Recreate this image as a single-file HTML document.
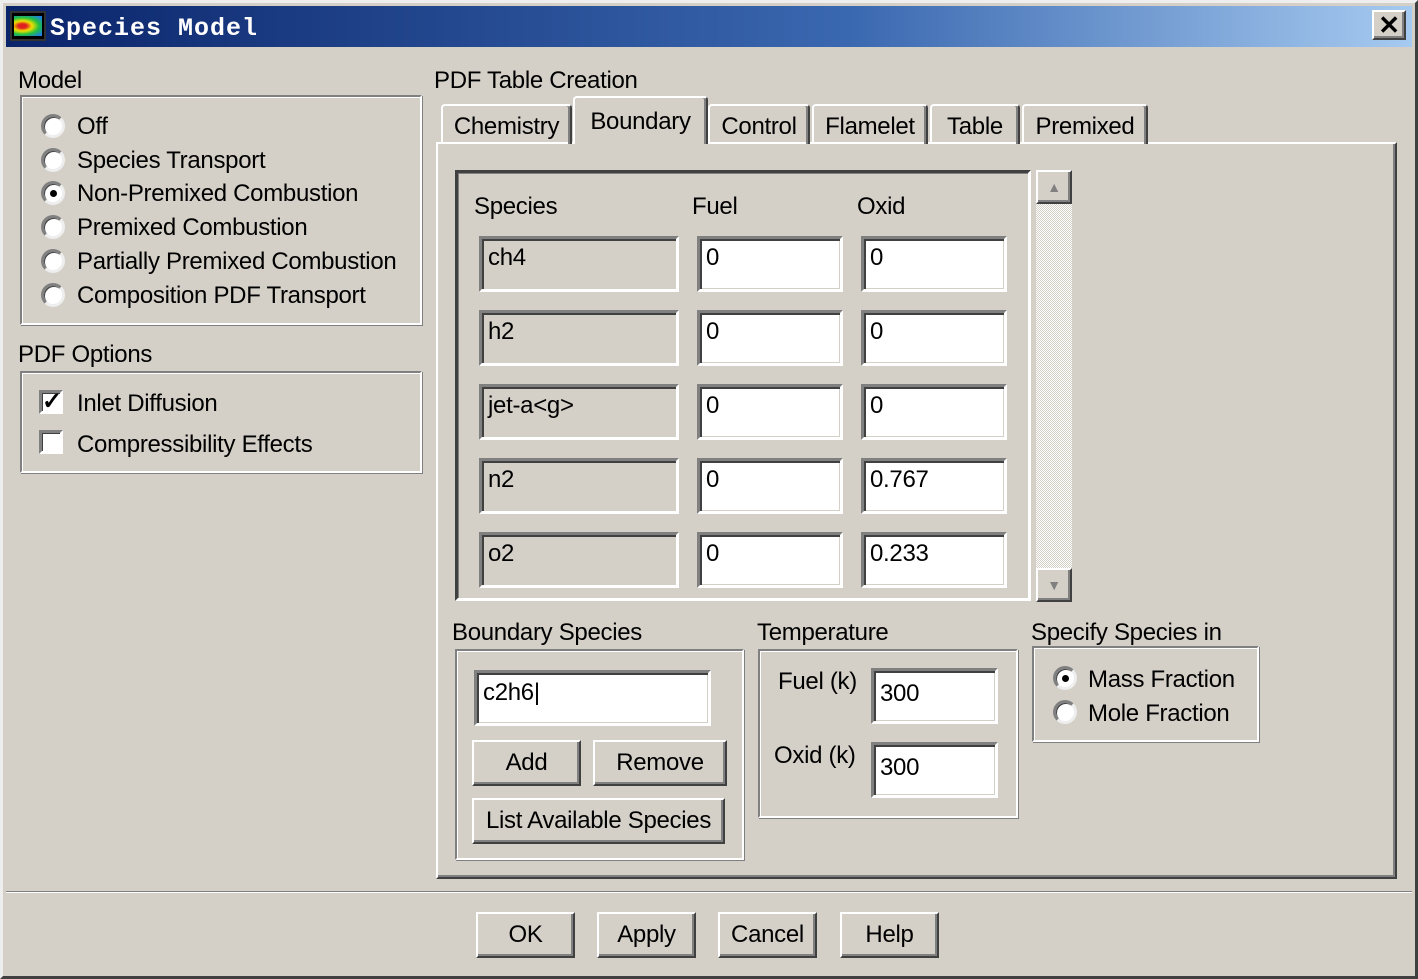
<!DOCTYPE html>
<html><head><meta charset="utf-8"><style>
*{box-sizing:border-box;margin:0;padding:0}
body{width:1418px;height:979px;background:#d4d0c8;position:relative;overflow:hidden;font-family:"Liberation Sans",sans-serif;font-size:24px;letter-spacing:-0.3px;color:#000}
div,span{position:absolute}
.frame{left:0;top:0;width:1418px;height:979px;border:3px solid;border-color:#eee #404040 #404040 #eee}
.title{left:6px;top:6px;width:1406px;height:41px;background:linear-gradient(90deg,#0a246a 0%,#3a68b0 60%,#a6caf0 100%)}
.tt{left:44px;top:8px;color:#fff;font-family:"Liberation Mono",monospace;font-weight:bold;font-size:25px;letter-spacing:1px}
.t{white-space:nowrap;line-height:28px;margin-top:1px}
.etch{border:2px solid;border-color:#808080 #fff #fff #808080;box-shadow:inset 1px 1px 0 #fff,1px 1px 0 #808080}
.sunk{border:3px solid;border-color:#808080 #fff #fff #808080;box-shadow:inset 2px 2px 0 #404040,inset -1px -1px 0 #d4d0c8;background:#fff}
.sunkg{background:#d4d0c8}
.rais{border:2px solid;border-color:#fff #404040 #404040 #fff;box-shadow:inset -2px -2px 0 #808080;background:#d4d0c8;text-align:center;line-height:42px}
.rad{width:24px;height:24px;border-radius:50%;background:#fff;border:3px solid;border-color:#808080 #eee #eee #808080;box-shadow:inset 1px 1px 0 #404040}
.dot{left:6px;top:6px;width:7px;height:7px;border-radius:50%;background:#000}
.chk{width:24px;height:24px;background:#fff;border:3px solid;border-color:#808080 #fff #fff #808080;box-shadow:inset 1px 1px 0 #404040}
.in{padding-left:6px;padding-top:5px;line-height:28px}
.tab{top:100px;height:44px;border:2px solid;border-bottom:none;border-color:#fff #404040 #fff #fff;box-shadow:inset -2px 0 0 #808080;text-align:center;line-height:44px;border-radius:4px 4px 0 0}
</style></head><body>
<div class="frame"></div>
<div class="title">
 <div style="left:4px;top:5px;width:36px;height:30px;background:#000;border:2px solid #333"><div style="left:2px;top:3px;width:28px;height:20px;background:radial-gradient(ellipse at 30% 50%,#e02020 15%,#f0e000 35%,#20c040 60%,#2080e0 90%)"></div></div>
 <div class="tt">Species Model</div>
 <div class="rais" style="left:1366px;top:4px;width:34px;height:30px;line-height:26px;font-weight:bold;font-size:26px">✕</div>
</div>

<div class="t" style="left:18px;top:66px">Model</div>
<div class="etch" style="left:20px;top:95px;width:402px;height:230px"></div>
<div class="rad" style="left:41px;top:114px"></div><div class="t" style="left:77px;top:112px">Off</div>
<div class="rad" style="left:41px;top:148px"></div><div class="t" style="left:77px;top:146px">Species Transport</div>
<div class="rad" style="left:41px;top:181px"><div class="dot"></div></div><div class="t" style="left:77px;top:179px">Non-Premixed Combustion</div>
<div class="rad" style="left:41px;top:215px"></div><div class="t" style="left:77px;top:213px">Premixed Combustion</div>
<div class="rad" style="left:41px;top:249px"></div><div class="t" style="left:77px;top:247px">Partially Premixed Combustion</div>
<div class="rad" style="left:41px;top:283px"></div><div class="t" style="left:77px;top:281px">Composition PDF Transport</div>

<div class="t" style="left:18px;top:340px">PDF Options</div>
<div class="etch" style="left:20px;top:371px;width:402px;height:102px"></div>
<div class="chk" style="left:39px;top:390px"><span style="left:0;top:-6px;font-size:24px;font-weight:bold">✓</span></div><div class="t" style="left:77px;top:389px">Inlet Diffusion</div>
<div class="chk" style="left:39px;top:430px"></div><div class="t" style="left:77px;top:430px">Compressibility Effects</div>

<div class="t" style="left:434px;top:66px">PDF Table Creation</div>
<div style="left:436px;top:142px;width:961px;height:737px;border:2px solid;border-color:#fff #404040 #404040 #fff;box-shadow:inset -2px -2px 0 #808080"></div>
<div class="tab" style="left:441px;width:131px;top:104px;height:40px;line-height:42px">Chemistry</div>
<div class="tab" style="left:708px;width:102px;top:104px;height:40px;line-height:42px">Control</div>
<div class="tab" style="left:812px;width:116px;top:104px;height:40px;line-height:42px">Flamelet</div>
<div class="tab" style="left:930px;width:90px;top:104px;height:40px;line-height:42px">Table</div>
<div class="tab" style="left:1022px;width:126px;top:104px;height:40px;line-height:42px">Premixed</div>
<div class="tab" style="left:573px;width:135px;top:96px;height:48px;line-height:48px;background:#d4d0c8">Boundary</div>

<div style="left:455px;top:170px;width:576px;height:431px;border:3px solid;border-color:#404040 #fff #fff #404040;box-shadow:inset 1px 1px 0 #808080"></div>
<div style="left:1036px;top:170px;width:36px;height:432px;background:repeating-conic-gradient(#fff 0 25%,#d4d0c8 0 50%) 0 0/2px 2px"></div>
<div class="rais" style="left:1036px;top:170px;width:36px;height:34px;line-height:30px;font-size:14px;color:#808080">▲</div>
<div class="rais" style="left:1036px;top:568px;width:36px;height:34px;line-height:30px;font-size:14px;color:#808080">▼</div>
<div class="t" style="left:474px;top:192px">Species</div>
<div class="t" style="left:692px;top:192px">Fuel</div>
<div class="t" style="left:857px;top:192px">Oxid</div>

<div class="sunk sunkg in" style="left:479px;top:236px;width:200px;height:56px">ch4</div>
<div class="sunk in" style="left:697px;top:236px;width:146px;height:56px">0</div>
<div class="sunk in" style="left:861px;top:236px;width:146px;height:56px">0</div>
<div class="sunk sunkg in" style="left:479px;top:310px;width:200px;height:56px">h2</div>
<div class="sunk in" style="left:697px;top:310px;width:146px;height:56px">0</div>
<div class="sunk in" style="left:861px;top:310px;width:146px;height:56px">0</div>
<div class="sunk sunkg in" style="left:479px;top:384px;width:200px;height:56px">jet-a&lt;g&gt;</div>
<div class="sunk in" style="left:697px;top:384px;width:146px;height:56px">0</div>
<div class="sunk in" style="left:861px;top:384px;width:146px;height:56px">0</div>
<div class="sunk sunkg in" style="left:479px;top:458px;width:200px;height:56px">n2</div>
<div class="sunk in" style="left:697px;top:458px;width:146px;height:56px">0</div>
<div class="sunk in" style="left:861px;top:458px;width:146px;height:56px">0.767</div>
<div class="sunk sunkg in" style="left:479px;top:532px;width:200px;height:56px">o2</div>
<div class="sunk in" style="left:697px;top:532px;width:146px;height:56px">0</div>
<div class="sunk in" style="left:861px;top:532px;width:146px;height:56px">0.233</div>

<div class="t" style="left:452px;top:618px">Boundary Species</div>
<div class="etch" style="left:455px;top:649px;width:289px;height:211px"></div>
<div class="sunk in" style="left:474px;top:670px;width:237px;height:56px;padding-top:6px">c2h6|</div>
<div class="rais" style="left:472px;top:740px;width:109px;height:46px">Add</div>
<div class="rais" style="left:593px;top:740px;width:134px;height:46px">Remove</div>
<div class="rais" style="left:472px;top:798px;width:253px;height:46px">List Available Species</div>

<div class="t" style="left:757px;top:618px">Temperature</div>
<div class="etch" style="left:758px;top:649px;width:260px;height:169px"></div>
<div class="t" style="left:778px;top:667px">Fuel (k)</div>
<div class="sunk in" style="left:871px;top:668px;width:127px;height:56px;padding-top:9px">300</div>
<div class="t" style="left:774px;top:741px">Oxid (k)</div>
<div class="sunk in" style="left:871px;top:742px;width:127px;height:56px;padding-top:9px">300</div>

<div class="t" style="left:1031px;top:618px">Specify Species in</div>
<div class="etch" style="left:1032px;top:646px;width:227px;height:96px"></div>
<div class="rad" style="left:1053px;top:666px"><div class="dot"></div></div><div class="t" style="left:1088px;top:665px">Mass Fraction</div>
<div class="rad" style="left:1053px;top:700px"></div><div class="t" style="left:1088px;top:699px">Mole Fraction</div>

<div style="left:6px;top:891px;width:1406px;height:2px;border-top:1px solid #808080;border-bottom:1px solid #fff"></div>
<div class="rais" style="left:476px;top:912px;width:99px;height:46px">OK</div>
<div class="rais" style="left:597px;top:912px;width:99px;height:46px">Apply</div>
<div class="rais" style="left:718px;top:912px;width:99px;height:46px">Cancel</div>
<div class="rais" style="left:840px;top:912px;width:99px;height:46px">Help</div>
</body></html>
